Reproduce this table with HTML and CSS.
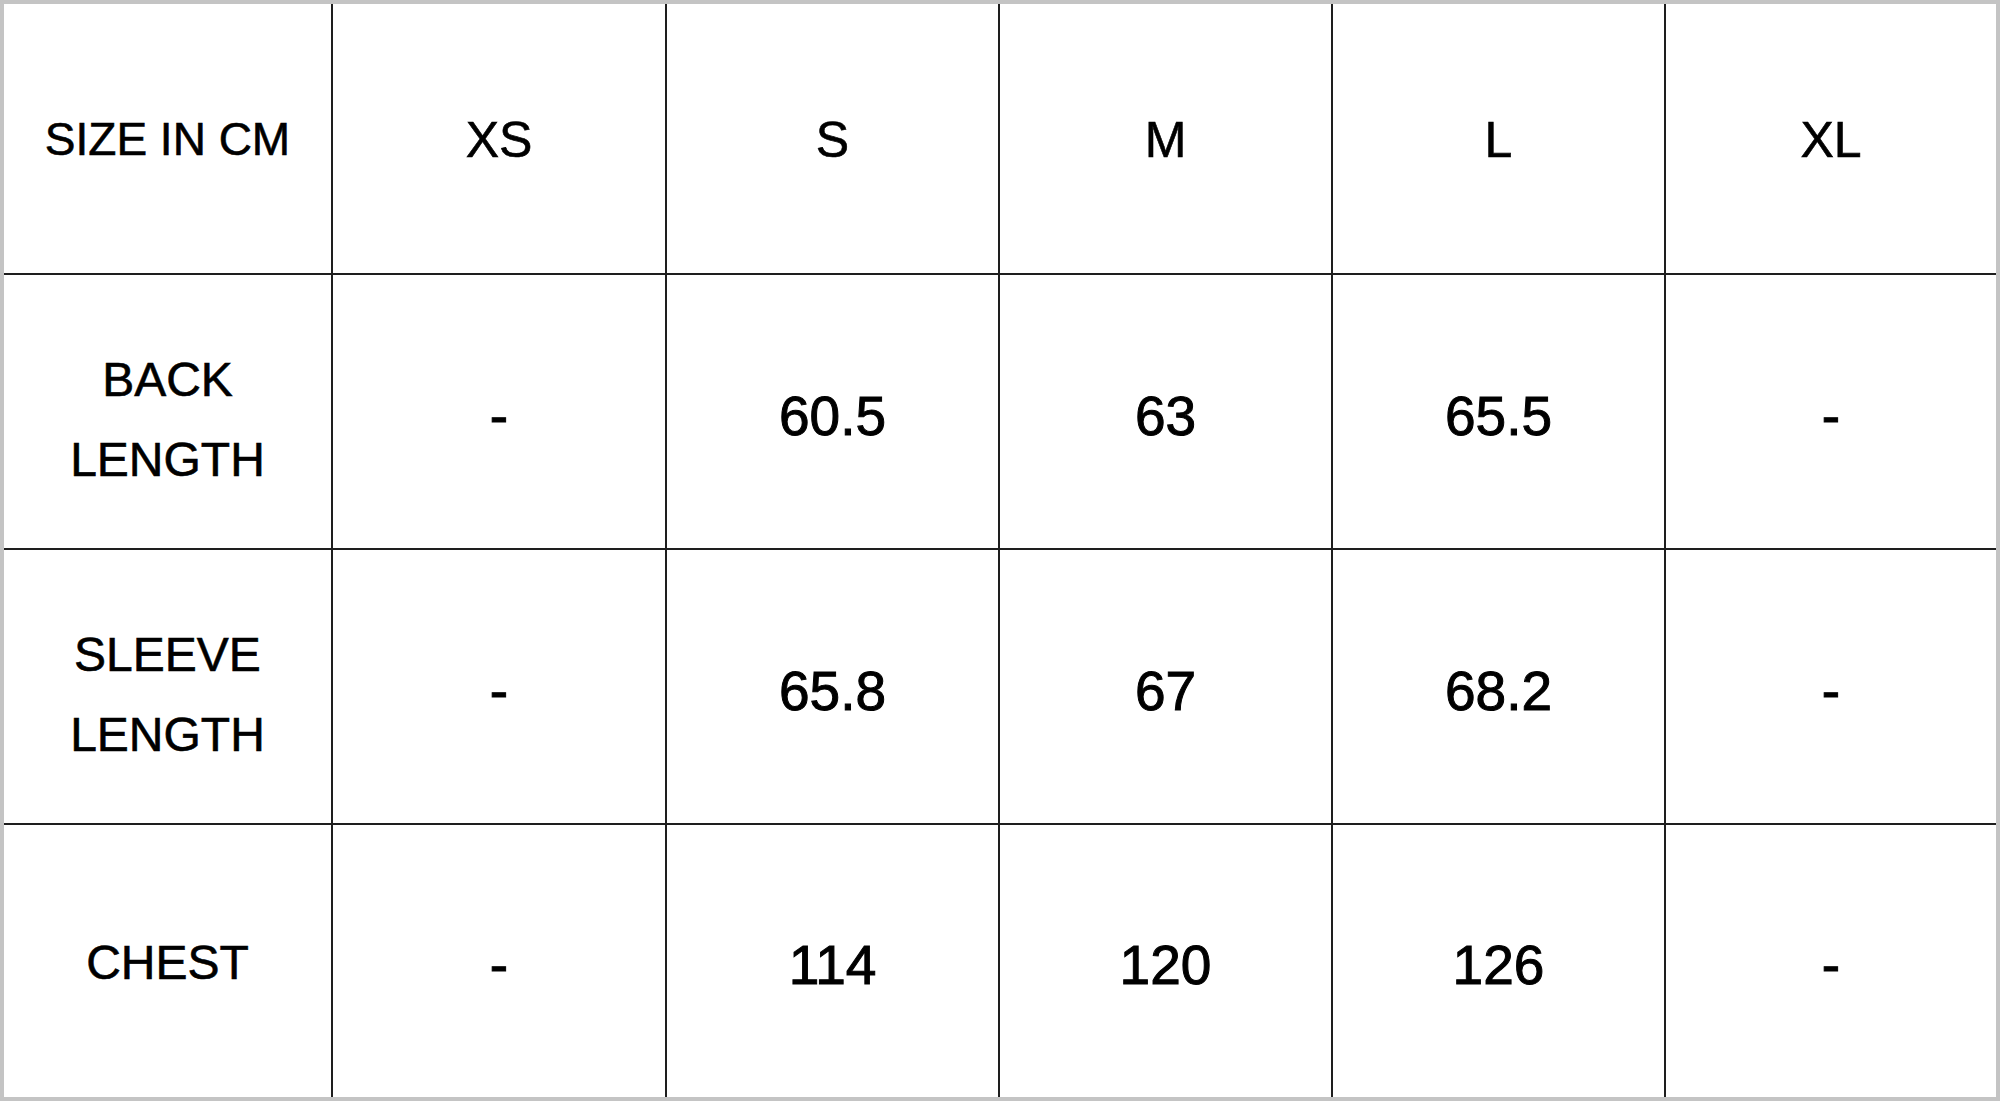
FILE: index.html
```html
<!DOCTYPE html>
<html>
<head>
<meta charset="utf-8">
<link rel="stylesheet" href="styles.css">
</head>
<body>
<div class="frame">
  <div class="cell label small">SIZE IN CM</div>
  <div class="cell head">XS</div>
  <div class="cell head">S</div>
  <div class="cell head">M</div>
  <div class="cell head">L</div>
  <div class="cell head last">XL</div>

  <div class="cell label">BACK<br>LENGTH</div>
  <div class="cell num">-</div>
  <div class="cell num">60.5</div>
  <div class="cell num">63</div>
  <div class="cell num">65.5</div>
  <div class="cell num last">-</div>

  <div class="cell label">SLEEVE<br>LENGTH</div>
  <div class="cell num">-</div>
  <div class="cell num">65.8</div>
  <div class="cell num">67</div>
  <div class="cell num">68.2</div>
  <div class="cell num last">-</div>

  <div class="cell label bottom">CHEST</div>
  <div class="cell num bottom">-</div>
  <div class="cell num bottom">114</div>
  <div class="cell num bottom">120</div>
  <div class="cell num bottom">126</div>
  <div class="cell num bottom last">-</div>
</div>
</body>
</html>
```
FILE: styles.css
```css
html, body {
  margin: 0;
  padding: 0;
  background: #ffffff;
}
body {
  font-family: "Liberation Sans", Arial, sans-serif;
  color: #000;
}
.frame {
  box-sizing: border-box;
  width: 2000px;
  height: 1101px;
  border: 4px solid #c4c4c4;
  display: grid;
  grid-template-columns: 329px 334px 333px 333px 333px 330px;
  grid-template-rows: 271px 275px 275px 272px;
  background: #fff;
}
.cell {
  box-sizing: border-box;
  border-right: 2px solid #1e1e1e;
  border-bottom: 2px solid #1e1e1e;
  display: flex;
  align-items: center;
  justify-content: center;
  text-align: center;
  -webkit-text-stroke: 0.6px #000;
}
.cell.last {
  border-right: none;
}
.cell.bottom {
  border-bottom: none;
}
.label {
  font-size: 48px;
  line-height: 80px;
  padding-top: 16px;
}
.label.small {
  font-size: 46px;
  padding-top: 0;
}
.label.bottom {
  padding-top: 4px;
}
.head {
  font-size: 50px;
  padding-top: 2px;
}
.num {
  font-size: 55px;
  padding-top: 8px;
  -webkit-text-stroke: 1px #000;
}
```
